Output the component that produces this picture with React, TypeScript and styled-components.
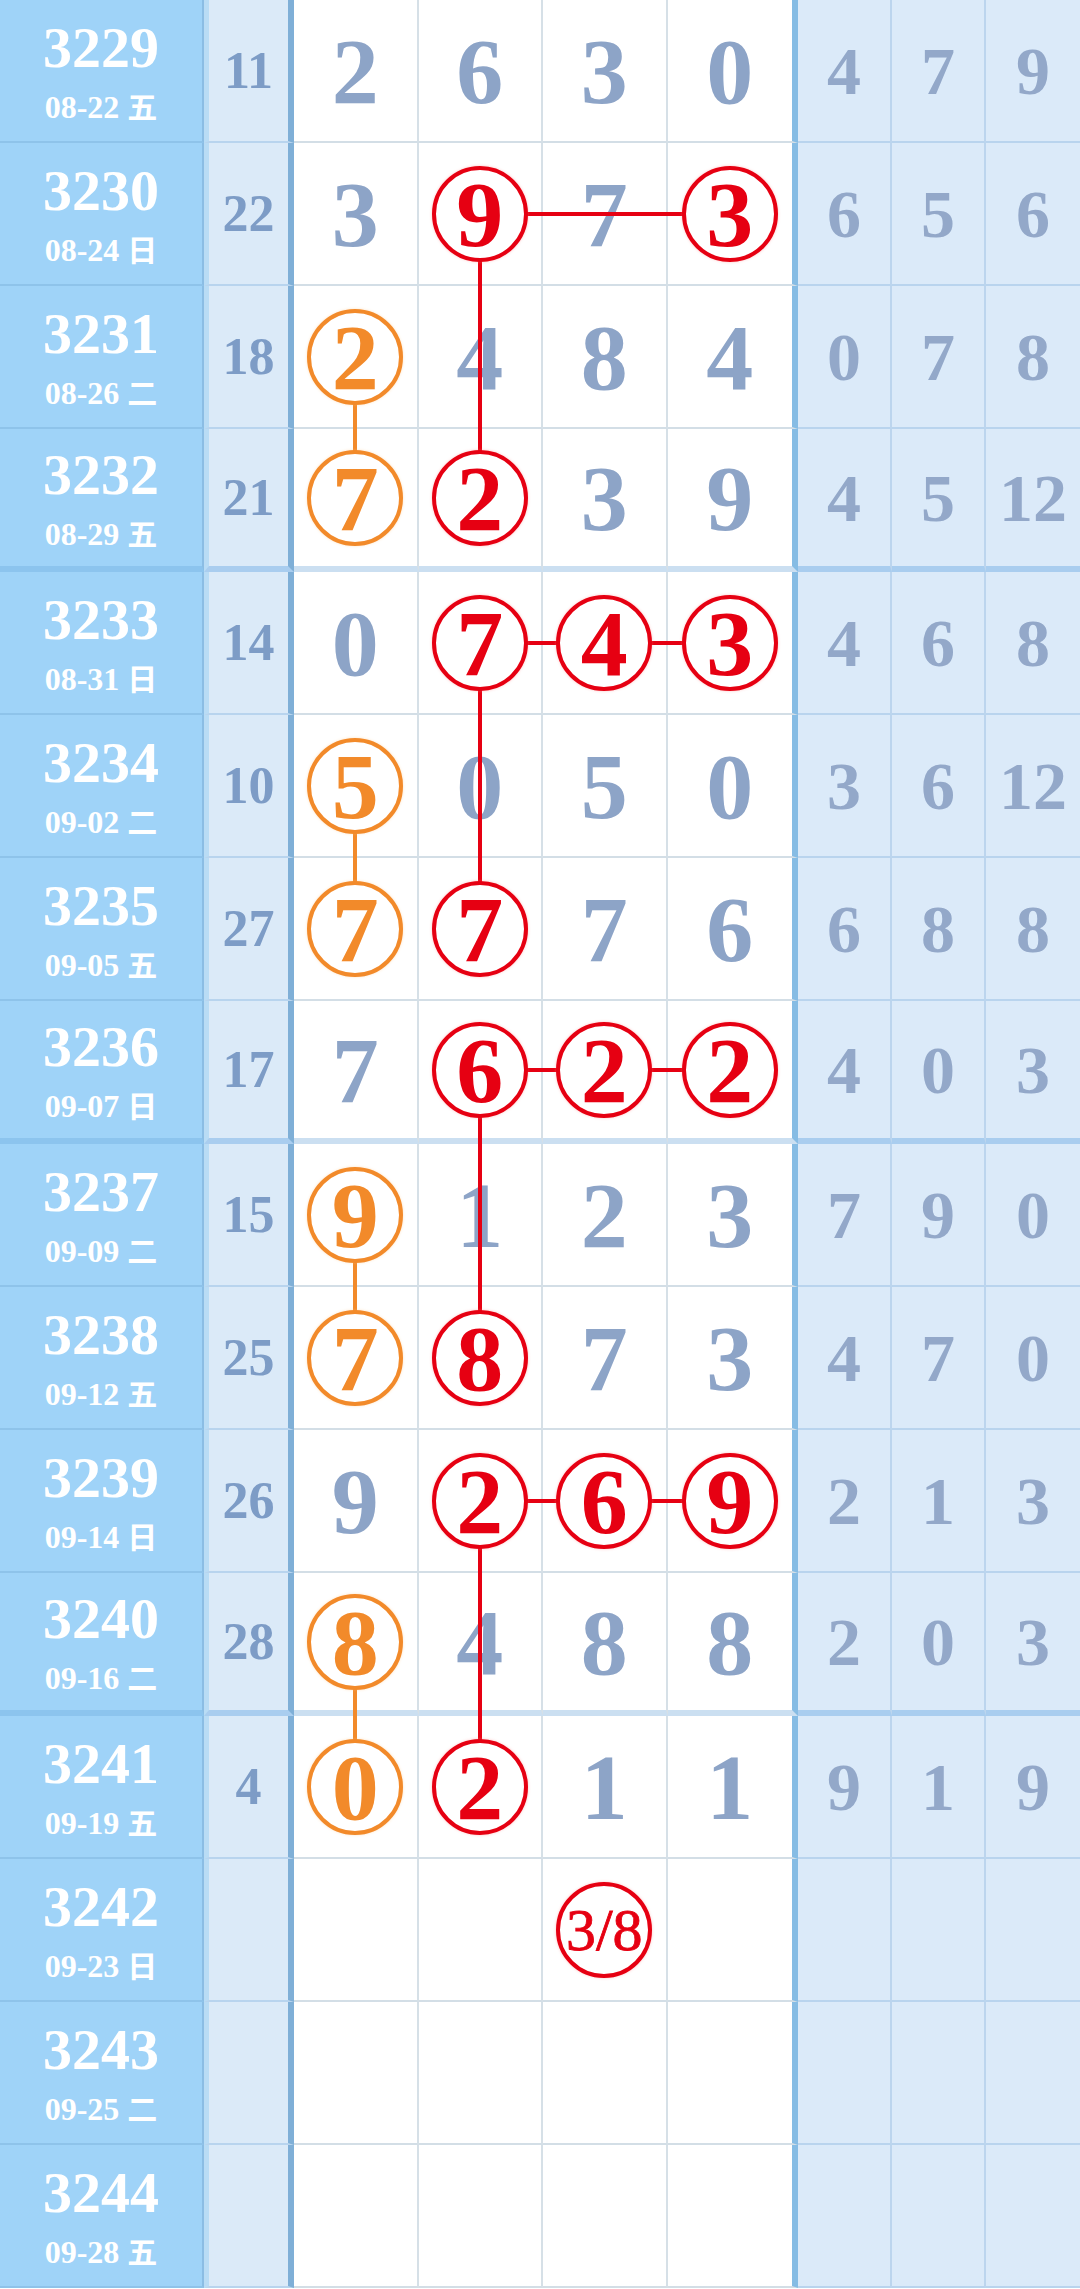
import React from 'react'
import styled, { createGlobalStyle } from 'styled-components'

const ROW_H = 143
const MAIN_W = 125
const RED = '#e60012'
const ORANGE = '#f28a2a'

type Ring = 'red' | 'orange'
interface ICell {
    v: string;
    ring?: Ring;
    right?: number;
    down?: number;
    small?: boolean;
}
interface IRow {
    issue: string;
    date: string;
    sum: string;
    main: ICell[];
    tail: string[];
    group?: boolean;
}

const GlobalStyle = createGlobalStyle`
    html, body {
        margin:0;
        padding:0;
        background:#ffffff;
    }
    body {
        font-family:"Liberation Serif", "Noto Sans CJK SC", serif;
    }
`
const Board = styled.div`
    width:1080px;
    display:flex;
    flex-direction:column;
`
const Row = styled.div`
    display:grid;
    grid-template-columns:204px 90px 124.5px 124.5px 124.5px 130.5px 94px 94px 94px;
    height:${ROW_H}px;
`
const IssueCell = styled.div<{ $group?: boolean }>`
    box-sizing:border-box;
    background:#9fd3f8;
    border-right:2px solid #8bbde4;
    border-bottom:${p => p.$group ? '6px solid #8cc4ee' : '2px solid #8ec3ea'};
    display:flex;
    flex-direction:column;
    align-items:center;
    justify-content:center;
    gap:13px;
    color:#ffffff;
    font-weight:bold;
`
const IssueNo = styled.div`
    font-size:58px;
    line-height:1;
`
const IssueDate = styled.div`
    font-size:32px;
    line-height:1;
    white-space:pre;
    span {
        font-family:"Noto Sans CJK SC", sans-serif;
        font-size:30px;
        margin-left:8px;
    }
`
const SumCell = styled.div<{ $group?: boolean }>`
    box-sizing:border-box;
    background:#dbeaf8;
    border-left:5px solid #b9dcf5;
    border-right:6px solid #7fafd7;
    border-bottom:${p => p.$group ? '6px solid #a9cdef' : '2px solid #b8d4ee'};
    display:flex;
    align-items:center;
    justify-content:center;
    color:#7d9cc6;
    font-size:52px;
    font-weight:bold;
    line-height:1;
`
const MainCell = styled.div<{ $group?: boolean; $last?: boolean }>`
    position:relative;
    box-sizing:border-box;
    background:#ffffff;
    border-right:${p => p.$last ? '6px solid #86bce4' : '2px solid #d6e0e7'};
    border-bottom:${p => p.$group ? '6px solid #cbdff1' : '2px solid #d3dee6'};
    display:flex;
    align-items:center;
    justify-content:center;
`
const Digit = styled.span`
    color:#8da4c7;
    font-size:94px;
    font-weight:bold;
    line-height:1;
`
const Circle = styled.div<{ $ring: Ring; $small?: boolean }>`
    position:relative;
    z-index:2;
    box-sizing:border-box;
    width:96px;
    height:96px;
    border-radius:50%;
    border:4px solid ${p => p.$ring === 'red' ? RED : ORANGE};
    background:#ffffff;
    box-shadow:0 0 3px ${p => p.$ring === 'red' ? 'rgba(255,120,120,.45)' : 'rgba(255,190,120,.45)'};
    display:flex;
    align-items:center;
    justify-content:center;
    color:${p => p.$ring === 'red' ? RED : ORANGE};
    font-size:${p => p.$small ? '60px' : '94px'};
    font-weight:${p => p.$small ? 'normal' : 'bold'};
    -webkit-text-stroke:${p => p.$small ? '0.8px' : '0'};
    line-height:1;
`
const Link = styled.span<{ $ring: Ring; $dir: 'down' | 'right'; $span: number }>`
    position:absolute;
    z-index:1;
    background:${p => p.$ring === 'red' ? RED : ORANGE};
    ${p => p.$dir === 'down'
        ? `left:calc(50% - 2px); top:50%; width:4px; height:${p.$span * ROW_H}px;`
        : `top:calc(50% - 2px); left:50%; height:4px; width:${p.$span * MAIN_W}px;`}
`
const TailCell = styled.div<{ $group?: boolean; $last?: boolean }>`
    box-sizing:border-box;
    background:#dbeaf9;
    border-right:${p => p.$last ? 'none' : '2px solid #bcd5ee'};
    border-bottom:${p => p.$group ? '6px solid #a9cdef' : '2px solid #b9d4ee'};
    display:flex;
    align-items:center;
    justify-content:center;
    color:#93a8c9;
    font-size:68px;
    font-weight:bold;
    line-height:1;
`

const n = (v: string): ICell => ({ v })
const r = (v: string, extra: Partial<ICell> = {}): ICell => ({ v, ring: 'red', ...extra })
const o = (v: string, extra: Partial<ICell> = {}): ICell => ({ v, ring: 'orange', ...extra })
const blank = [n(''), n(''), n(''), n('')]

const rows: IRow[] = [
    { issue: '3229', date: '08-22|五', sum: '11', main: [n('2'), n('6'), n('3'), n('0')], tail: ['4', '7', '9'] },
    { issue: '3230', date: '08-24|日', sum: '22', main: [n('3'), r('9', { right: 2, down: 2 }), n('7'), r('3')], tail: ['6', '5', '6'] },
    { issue: '3231', date: '08-26|二', sum: '18', main: [o('2', { down: 1 }), n('4'), n('8'), n('4')], tail: ['0', '7', '8'] },
    { issue: '3232', date: '08-29|五', sum: '21', main: [o('7'), r('2'), n('3'), n('9')], tail: ['4', '5', '12'], group: true },
    { issue: '3233', date: '08-31|日', sum: '14', main: [n('0'), r('7', { right: 2, down: 2 }), r('4'), r('3')], tail: ['4', '6', '8'] },
    { issue: '3234', date: '09-02|二', sum: '10', main: [o('5', { down: 1 }), n('0'), n('5'), n('0')], tail: ['3', '6', '12'] },
    { issue: '3235', date: '09-05|五', sum: '27', main: [o('7'), r('7'), n('7'), n('6')], tail: ['6', '8', '8'] },
    { issue: '3236', date: '09-07|日', sum: '17', main: [n('7'), r('6', { right: 2, down: 2 }), r('2'), r('2')], tail: ['4', '0', '3'], group: true },
    { issue: '3237', date: '09-09|二', sum: '15', main: [o('9', { down: 1 }), n('1'), n('2'), n('3')], tail: ['7', '9', '0'] },
    { issue: '3238', date: '09-12|五', sum: '25', main: [o('7'), r('8'), n('7'), n('3')], tail: ['4', '7', '0'] },
    { issue: '3239', date: '09-14|日', sum: '26', main: [n('9'), r('2', { right: 2, down: 2 }), r('6'), r('9')], tail: ['2', '1', '3'] },
    { issue: '3240', date: '09-16|二', sum: '28', main: [o('8', { down: 1 }), n('4'), n('8'), n('8')], tail: ['2', '0', '3'], group: true },
    { issue: '3241', date: '09-19|五', sum: '4', main: [o('0'), r('2'), n('1'), n('1')], tail: ['9', '1', '9'] },
    { issue: '3242', date: '09-23|日', sum: '', main: [n(''), n(''), r('3/8', { small: true }), n('')], tail: ['', '', ''] },
    { issue: '3243', date: '09-25|二', sum: '', main: blank, tail: ['', '', ''] },
    { issue: '3244', date: '09-28|五', sum: '', main: blank, tail: ['', '', ''] },
]

const Cell: React.FC<{ cell: ICell; group?: boolean; last?: boolean }> = ({ cell, group, last }) => {
    const ring = cell.ring || 'red'
    return (
        <MainCell $group={group} $last={last}>
            {cell.ring
                ? <Circle $ring={cell.ring} $small={cell.small}>{cell.v}</Circle>
                : <Digit>{cell.v}</Digit>}
            {cell.right ? <Link $ring={ring} $dir='right' $span={cell.right} /> : null}
            {cell.down ? <Link $ring={ring} $dir='down' $span={cell.down} /> : null}
        </MainCell>
    )
}

export default function App() {
    return (
        <>
            <GlobalStyle />
            <Board>
                {rows.map(row => {
                    const [day, week] = row.date.split('|')
                    return (
                        <Row key={row.issue}>
                            <IssueCell $group={row.group}>
                                <IssueNo>{row.issue}</IssueNo>
                                <IssueDate>{day}<span>{week}</span></IssueDate>
                            </IssueCell>
                            <SumCell $group={row.group}>{row.sum}</SumCell>
                            {row.main.map((c, i) => (
                                <Cell key={i} cell={c} group={row.group} last={i === 3} />
                            ))}
                            {row.tail.map((t, i) => (
                                <TailCell key={i} $group={row.group} $last={i === 2}>{t}</TailCell>
                            ))}
                        </Row>
                    )
                })}
            </Board>
        </>
    )
}
